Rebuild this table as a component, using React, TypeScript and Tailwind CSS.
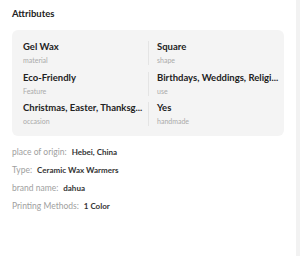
const attrs = [
  { value: 'Gel Wax', label: 'material' },
  { value: 'Square', label: 'shape' },
  { value: 'Eco-Friendly', label: 'Feature' },
  { value: 'Birthdays, Weddings, Religi...', label: 'use' },
  { value: 'Christmas, Easter, Thanksg...', label: 'occasion' },
  { value: 'Yes', label: 'handmade' },
];

const details = [
  { label: 'place of origin:', value: 'Hebei, China' },
  { label: 'Type:', value: 'Ceramic Wax Warmers' },
  { label: 'brand name:', value: 'dahua' },
  { label: 'Printing Methods:', value: '1 Color' },
];

export default function App() {
  return (
    <div className="flex h-[256px] w-[300px] bg-[#f2f2f2] font-['Lato',sans-serif]">
      <div className="w-[296px] bg-white">
        <h2 className="px-3 pt-[8px] text-[9.5px] leading-[12px] font-bold text-[#222]">Attributes</h2>

        {/* Attribute grid */}
        <div className="mx-3 mt-[10px] rounded-md bg-[#f4f4f4] px-[11px] pt-[11px] pb-[10px]">
          <div className="grid grid-cols-2 gap-y-[6.5px]">
            {attrs.map((a, i) => (
              <div key={a.label} className={i % 2 === 1 ? 'min-w-0 border-l border-[#e4e4e4] pl-2' : 'min-w-0 pr-2'}>
                <p className="whitespace-nowrap text-[9.5px] leading-[12px] font-bold text-[#222]">{a.value}</p>
                <p className="mt-[3px] text-[7px] leading-[9px] text-[#aaa]">{a.label}</p>
              </div>
            ))}
          </div>
        </div>

        {/* Extra details */}
        <div className="mt-[11px] flex flex-col gap-[7px] px-3">
          {details.map((d) => (
            <div key={d.label} className="flex items-center gap-[5px] leading-[11px]">
              <span className="text-[8.5px] text-[#a0a0a0]">{d.label}</span>
              <span className="text-[8px] font-bold text-[#333]">{d.value}</span>
            </div>
          ))}
        </div>
      </div>
    </div>
  );
}
